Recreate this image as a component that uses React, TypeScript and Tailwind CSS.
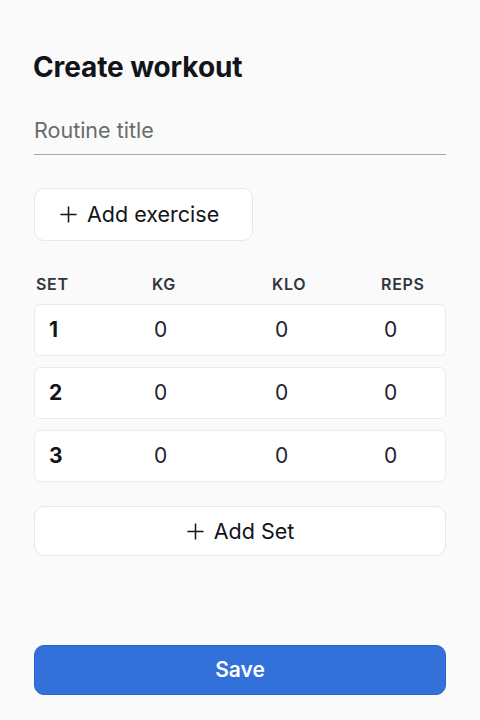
import React from 'react';

const rows = [1, 2, 3];

const PlusIcon: React.FC<{ className?: string }> = ({ className }) => (
  <svg viewBox="0 0 20 20" className={className} fill="none" stroke="currentColor" strokeWidth={1.6} strokeLinecap="butt">
    <path d="M10 1.5v17M1.5 10h17" />
  </svg>
);

const App: React.FC = () => {
  return (
    <div className="min-h-[720px] w-[480px] bg-[#fafafa] px-[34px] pt-[49px] flex flex-col font-['Inter',sans-serif] text-[#111418]">
      <h1 className="text-[28px] leading-[36px] font-bold tracking-[-0.1px] -ml-[1px]">Create workout</h1>

      <div className="mt-[30px] border-b border-[#a8a8a8] pb-[9px]">
        <input
          placeholder="Routine title"
          className="w-full bg-transparent outline-none text-[21.5px] leading-[30px] placeholder:text-[#6b6b6b]"
        />
      </div>

      <button className="mt-[33px] w-[219px] h-[53px] rounded-[10px] bg-white border border-[#e8e8e8] flex items-center gap-[9px] pl-[24px] text-[21.5px] text-[#111418]">
        <PlusIcon className="w-[19px] h-[19px]" />
        <span>Add exercise</span>
      </button>

      <div className="mt-[33px] grid grid-cols-[116px_120px_109px_1fr] pl-[2px] text-[16px] leading-[20px] font-semibold tracking-[0.7px] text-[#2f3640]">
        <span>SET</span>
        <span>KG</span>
        <span>KLO</span>
        <span>REPS</span>
      </div>

      <div className="mt-[10px] flex flex-col gap-[11px]">
        {rows.map((n) => (
          <div
            key={n}
            className="h-[52px] rounded-[6px] bg-white border border-[#ebebeb] grid grid-cols-[105px_121px_109px_1fr] items-center pl-[14px] text-[21px] text-[#1d2430]"
          >
            <span className="font-bold text-[#111418]">{n}</span>
            <span>0</span>
            <span>0</span>
            <span>0</span>
          </div>
        ))}
      </div>

      <button className="mt-[24px] h-[50px] rounded-[10px] bg-white border border-[#e8e8e8] flex items-center justify-center gap-[9px] text-[21.5px] text-[#111418]">
        <PlusIcon className="w-[19px] h-[19px]" />
        <span>Add Set</span>
      </button>

      <div className="flex-1" />

      <button className="mb-[25px] h-[50px] rounded-[10px] bg-[#3270da] border border-[#2b63c9] text-white text-[21px] font-semibold">
        Save
      </button>
    </div>
  );
};

export default App;
